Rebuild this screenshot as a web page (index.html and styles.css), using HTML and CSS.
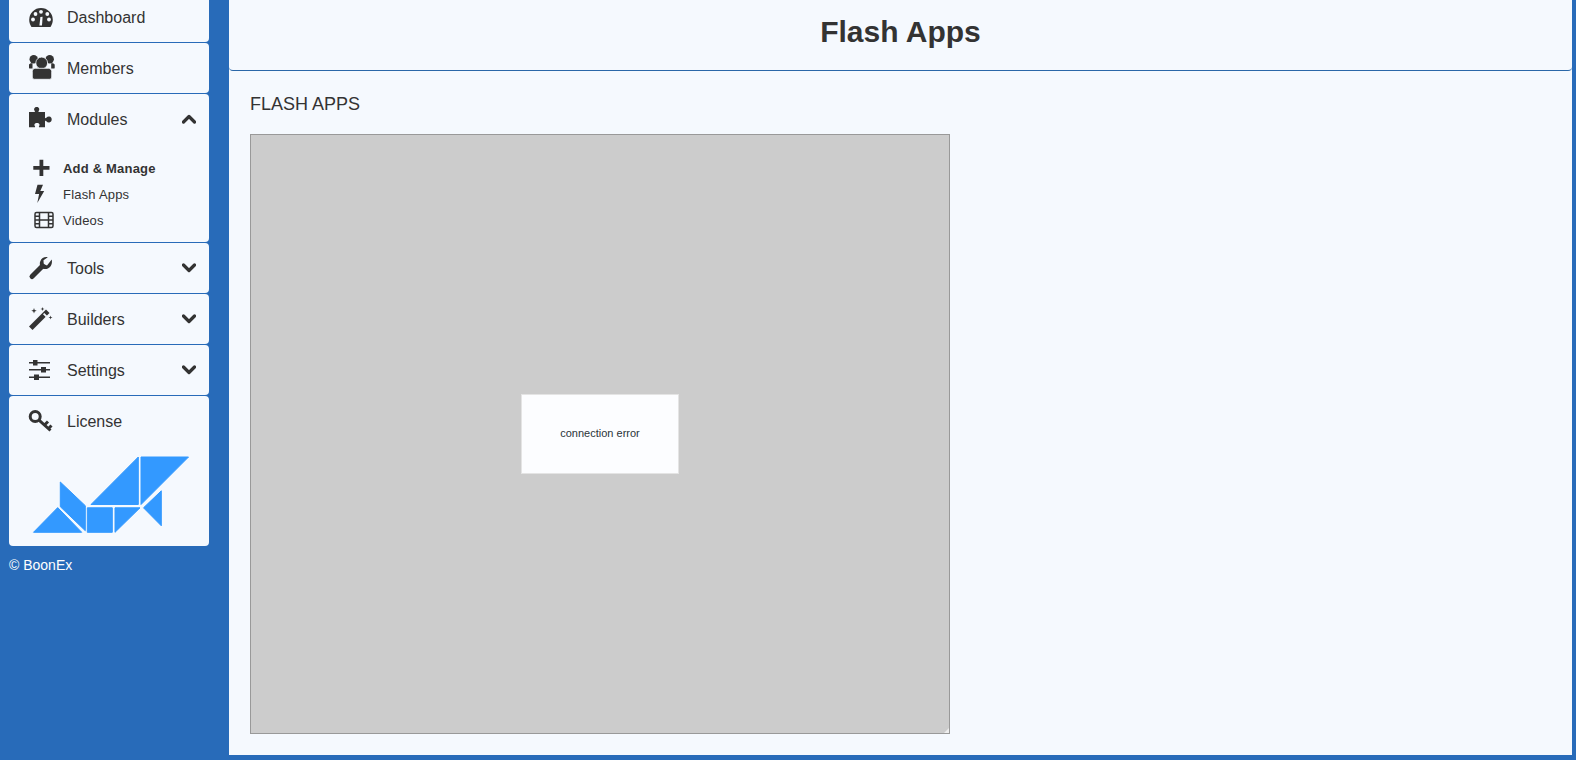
FILE: index.html
```html
<!DOCTYPE html>
<html lang="en">
<head>
    <meta charset="UTF-8">
    <title>Flash Apps</title>
    <link rel="stylesheet" href="styles.css">
</head>
<body>
    <div class="page">
        <aside class="sidebar">
            <a class="card card-cut">
                <div class="row">
                    <svg class="ico" viewBox="0 0 24 24"><path d="M12 3A11.800 11.800 0 0 0 .2 14.800c0 2.700.8 5.200 2.300 7.200h19c1.500-2 2.300-4.500 2.300-7.200A11.800 11.800 0 0 0 12 3z"/><g class="hole"><circle cx="4" cy="14.500" r="1.900"/><circle cx="6.500" cy="9" r="1.900"/><circle cx="12" cy="6.800" r="1.900"/><circle cx="18.300" cy="9" r="1.900"/><circle cx="20" cy="14.500" r="1.900"/><path d="M10.400 20.500l1-8.500 2.200-.3-.6 8.800z"/></g></svg>
                    <span class="label">Dashboard</span>
                </div>
            </a>
            <a class="card">
                <div class="row">
                    <svg class="ico" viewBox="0 0 24 24"><circle cx="4.700" cy="3.300" r="4.200"/><circle cx="20.700" cy="3.300" r="4.200"/><path d="M0 8.500c1-1.300 2-1.500 3.500-1.300v5.300H1c-1 0-1-.5-1-1zM25.700 8.500c-1-1.300-2-1.500-3.500-1.300v5.300h2.500c1 0 1-.5 1-1z"/><circle class="halo" cx="12.700" cy="7" r="5.900"/><path class="halo" d="M3.300 15.500c0-2 1.400-3.200 2.800-3.200h13.200c1.400 0 3.400 1.200 3.400 3.200v5.500c0 1.500-1 2.300-2.400 2.300H5.700c-1.400 0-2.400-.8-2.400-2.300z"/></svg>
                    <span class="label">Members</span>
                </div>
            </a>
            <div class="card">
                <div class="row">
                    <svg class="ico" viewBox="0 0 24 24"><path d="M0 5h5.300c.8 0 .8-.7.300-1.300C4.700 2.800 4.900 0 7.700 0s3 2.800 2.100 3.700c-.5.600-.5 1.300.3 1.300H16v5.500c0 .8.700.8 1.300.3.900-.9 2-1.400 3-1.200 1.500.2 2.400 1.300 2.400 2.900s-.9 2.700-2.400 2.900c-1 .2-2.100-.3-3-1.200-.6-.5-1.300-.5-1.300.3v5.800h-5.500c-.8 0-.8-.7-.3-1.300.7-.9.400-2.900-2.200-2.900s-2.900 2-2.200 2.900c.5.600.5 1.300-.3 1.300H0z"/></svg>
                    <span class="label">Modules</span>
                    <svg class="chev" viewBox="0 0 14 10"><polyline points="1.500,8 7,2.500 12.500,8"/></svg>
                </div>
                <ul class="submenu">
                    <li class="current">
                        <svg class="sub-ico" viewBox="0 0 20 20"><path d="M5.500 1.800h3.800v6.200h6.200v3.800H9.300v6.200H5.500v-6.200H-.7V8h6.200z"/></svg>
                        <span>Add &amp; Manage</span>
                    </li>
                    <li>
                        <svg class="sub-ico" viewBox="0 0 20 20"><path d="M3.500 .8h5.500L6.300 7h3.900L3.300 19l1.800-9H1z"/></svg>
                        <span>Flash Apps</span>
                    </li>
                    <li>
                        <svg class="sub-ico" viewBox="0 0 20 20"><g class="line"><rect x="1" y="2.500" width="18" height="15" rx="1.500"/><path d="M5.500 2.500v15M14.500 2.500v15M1 6.300h4.500M1 10h18M1 13.800h4.500M14.500 6.300H19M14.500 13.800H19"/></g></svg>
                        <span>Videos</span>
                    </li>
                </ul>
            </div>
            <div class="card">
                <div class="row">
                    <svg class="ico" viewBox="0 0 24 24"><path class="stroke-thick" d="M3 20.500L13.500 10"/><path d="M22.700 3.500c.9 3.500-.4 7.500-3.800 9-2.500 1.100-4.900.6-6.700-1-1.500-1.700-1.800-4.100-.9-6.200C12.600 2 15.700.6 18.800 1.300l-4.300 2.900.2 3.700 3.300 1.600z"/></svg>
                    <span class="label">Tools</span>
                    <svg class="chev" viewBox="0 0 14 10"><polyline points="1.500,2 7,7.500 12.500,2"/></svg>
                </div>
            </div>
            <div class="card">
                <div class="row">
                    <svg class="ico" viewBox="0 0 24 24"><path d="M0 19.500L17 2.500l3.500 3.500L3.500 23z"/><path class="hole" d="M14 7.300l1.300-1.300 3 3-1.300 1.300z"/><path d="M5 1l.7 2 2 .7-2 .7-.7 2-.7-2-2-.7 2-.7zM13.500 0l.5 1.500 1.500.5-1.500.5-.5 1.500-.5-1.500-1.500-.5 1.500-.5zM21.500 8.500l.5 1.500 1.500.5-1.500.5-.5 1.500-.5-1.500-1.500-.5 1.500-.5z"/></svg>
                    <span class="label">Builders</span>
                    <svg class="chev" viewBox="0 0 14 10"><polyline points="1.500,2 7,7.500 12.500,2"/></svg>
                </div>
            </div>
            <div class="card">
                <div class="row">
                    <svg class="ico" viewBox="0 0 24 24"><path d="M0 4h21v1.500H0zM0 11h21v1.500H0zM0 18.500h21V20H0z"/><path d="M4 2h4.500v5.500H4zM12 9h5v5.500h-5zM5 16.500h5V22H5z"/></svg>
                    <span class="label">Settings</span>
                    <svg class="chev" viewBox="0 0 14 10"><polyline points="1.500,2 7,7.500 12.500,2"/></svg>
                </div>
            </div>
            <div class="card card-last">
                <div class="row">
                    <svg class="ico" viewBox="0 0 24 24"><g class="line-key"><circle cx="6.200" cy="7.500" r="5"/><path d="M10 11.200L21.500 21.500M15.500 16l3.500-3.500M19.500 19.500l3-3"/></g></svg>
                    <span class="label">License</span>
                </div>
                <svg class="logo" viewBox="30 454 162 81" width="162" height="81">
                    <path d="M91 504.500L138.300 457v47.500zM141 457h47.500L141 504.500zM143.500 507.800l17.800-17v35zM33.500 532.300l24.200-24.700 24 24.700zM60.300 482l25 23.700v25l-25-24zM87.300 507.800h25v24.500h-25zM115 507.800h25L115 532.300z"/>
                </svg>
            </div>
            <p class="copy">© BoonEx</p>
        </aside>
        <main class="main">
            <header class="title-bar">
                <h1>Flash Apps</h1>
            </header>
            <section class="content">
                <h2>FLASH APPS</h2>
                <div class="flash-box">
                    <div class="flash-error">connection error</div>
                    <i class="resize-mark"></i>
                </div>
            </section>
        </main>
    </div>
</body>
</html>
```

FILE: styles.css
```css
html, body {
    margin: 0;
    height: 100%;
}
body {
    background: #286bb9;
    color: #333;
    font-family: 'Liberation Sans', Arial, sans-serif;
    font-size: 16px;
    overflow: hidden;
}
.page {
    display: flex;
    height: 755px;
    padding-right: 4px;
}

/* left column */
.sidebar {
    width: 200px;
    flex: none;
    padding-left: 9px;
    margin-right: 20px;
}
.card {
    display: block;
    background: #f5f9fe;
    border-radius: 4px;
    margin-bottom: 1px;
}
.card-cut {
    height: 42px;
    border-radius: 0 0 4px 4px;
}
.card-cut .row {
    height: 34px;
}
.card-last {
    height: 150px;
}
.row {
    display: flex;
    align-items: center;
    height: 50px;
    padding-left: 20px;
}
.label {
    padding-top: 2px;
}
.ico {
    width: 24px;
    height: 24px;
    flex: none;
    margin-right: 14px;
    fill: #333;
    overflow: visible;
}
.hole {
    fill: #f5f9fe;
}
.halo {
    stroke: #f5f9fe;
    stroke-width: .8;
}
.stroke-thick {
    stroke: #333;
    stroke-width: 5;
    stroke-linecap: round;
}
.line-key {
    fill: none;
    stroke: #333;
    stroke-width: 3;
}
.chev {
    width: 14px;
    height: 10px;
    margin-left: auto;
    margin-right: 13px;
    fill: none;
    stroke: #333;
    stroke-width: 3.200;
    stroke-linecap: round;
    stroke-linejoin: round;
}
.submenu {
    list-style: none;
    margin: 0;
    padding: 11px 0 9px 25px;
    font-size: 13px;
    letter-spacing: .2px;
}
.submenu li {
    display: flex;
    align-items: center;
    height: 26px;
}
.submenu .current {
    font-weight: bold;
}
.sub-ico {
    width: 20px;
    height: 20px;
    flex: none;
    margin-right: 9px;
    fill: #333;
    overflow: visible;
}
.line {
    fill: none;
    stroke: #333;
    stroke-width: 1.500;
}
.logo {
    display: block;
    margin: 8px 0 0 21px;
    fill: #3399ff;
    stroke: #3399ff;
    stroke-width: 1;
    stroke-linejoin: round;
}
.copy {
    margin: 11px 0 0;
    color: #fff;
    font-size: 14px;
}

/* right column */
.main {
    flex: 1;
    min-width: 0;
    background: #f5f9fe;
}
.title-bar {
    height: 70px;
    border-bottom: 1px solid #2a67a8;
    border-radius: 0 0 4px 4px;
    display: flex;
    align-items: center;
    justify-content: center;
}
.title-bar h1 {
    margin: 0;
    font-size: 30px;
    font-weight: bold;
    padding-bottom: 6px;
}
.content {
    padding: 23px 21px 0;
}
.content h2 {
    margin: 0 0 19px;
    font-size: 18px;
    font-weight: normal;
    line-height: 21px;
}
.flash-box {
    position: relative;
    box-sizing: border-box;
    width: 700px;
    height: 600px;
    background: #ccc;
    border: 1px solid #999;
    display: flex;
    align-items: center;
    justify-content: center;
}
.flash-error {
    box-sizing: border-box;
    width: 158px;
    height: 80px;
    background: #fcfdff;
    border: 1px solid #e4e4e4;
    display: flex;
    align-items: center;
    justify-content: center;
    font-size: 11px;
    padding-bottom: 2px;
    color: #2a3338;
}
.resize-mark {
    position: absolute;
    right: 0;
    bottom: 0;
    width: 0;
    height: 0;
    border-left: 5px solid transparent;
    border-bottom: 5px solid #eee;
}
```
